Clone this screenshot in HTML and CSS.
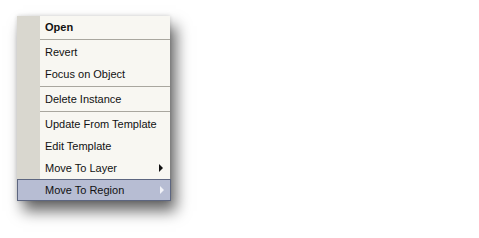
FILE: index.html
```html
<!DOCTYPE html>
<html lang="en">
<head>
    <meta charset="UTF-8">
    <title>Context Menu</title>
    <link rel="stylesheet" href="styles.css">
</head>
<body>
    <div class="menu">
        <div class="item bold">Open</div>
        <div class="sep"></div>
        <div class="item">Revert</div>
        <div class="item">Focus on Object</div>
        <div class="sep"></div>
        <div class="item">Delete Instance</div>
        <div class="sep"></div>
        <div class="item">Update From Template</div>
        <div class="item">Edit Template</div>
        <div class="item sub">Move To Layer<span class="arrow"></span></div>
        <div class="item sub active">Move To Region<span class="arrow"></span></div>
    </div>
</body>
</html>
```

FILE: styles.css
```css
html, body {
    height: 100%;
}
body {
    margin: 0;
    padding: 16px 0 0 17px;
    box-sizing: border-box;
    background: #ffffff;
    font-family: "Liberation Sans", Arial, sans-serif;
}
.menu {
    width: 153px;
    background: linear-gradient(to right, #d9d7cf 0, #d9d7cf 23px, #f8f7f2 23px);
    box-shadow: 6px 10px 14px rgba(0, 0, 0, 0.6), 0 0 4px rgba(0, 0, 0, 0.15);
}
.item {
    position: relative;
    height: 22px;
    line-height: 23px;
    padding-left: 28px;
    font-size: 11px;
    color: #111;
    white-space: nowrap;
}
.item.bold {
    font-weight: bold;
}
.sep {
    height: 3px;
    margin-left: 23px;
    border-top: 1px solid #f8f7f2;
    box-sizing: border-box;
    background: #a9a79f;
    border-bottom: 1px solid #f8f7f2;
}
.arrow {
    position: absolute;
    right: 7px;
    top: 7px;
    width: 0;
    height: 0;
    border-top: 4px solid transparent;
    border-bottom: 4px solid transparent;
    border-left: 4px solid #111;
}
.item.active {
    background: #b7bdd3;
    box-shadow: inset 0 0 0 1px #5d6680;
    margin-right: -1px;
}
.item.active .arrow {
    border-left-color: #f2f3f8;
}
```
